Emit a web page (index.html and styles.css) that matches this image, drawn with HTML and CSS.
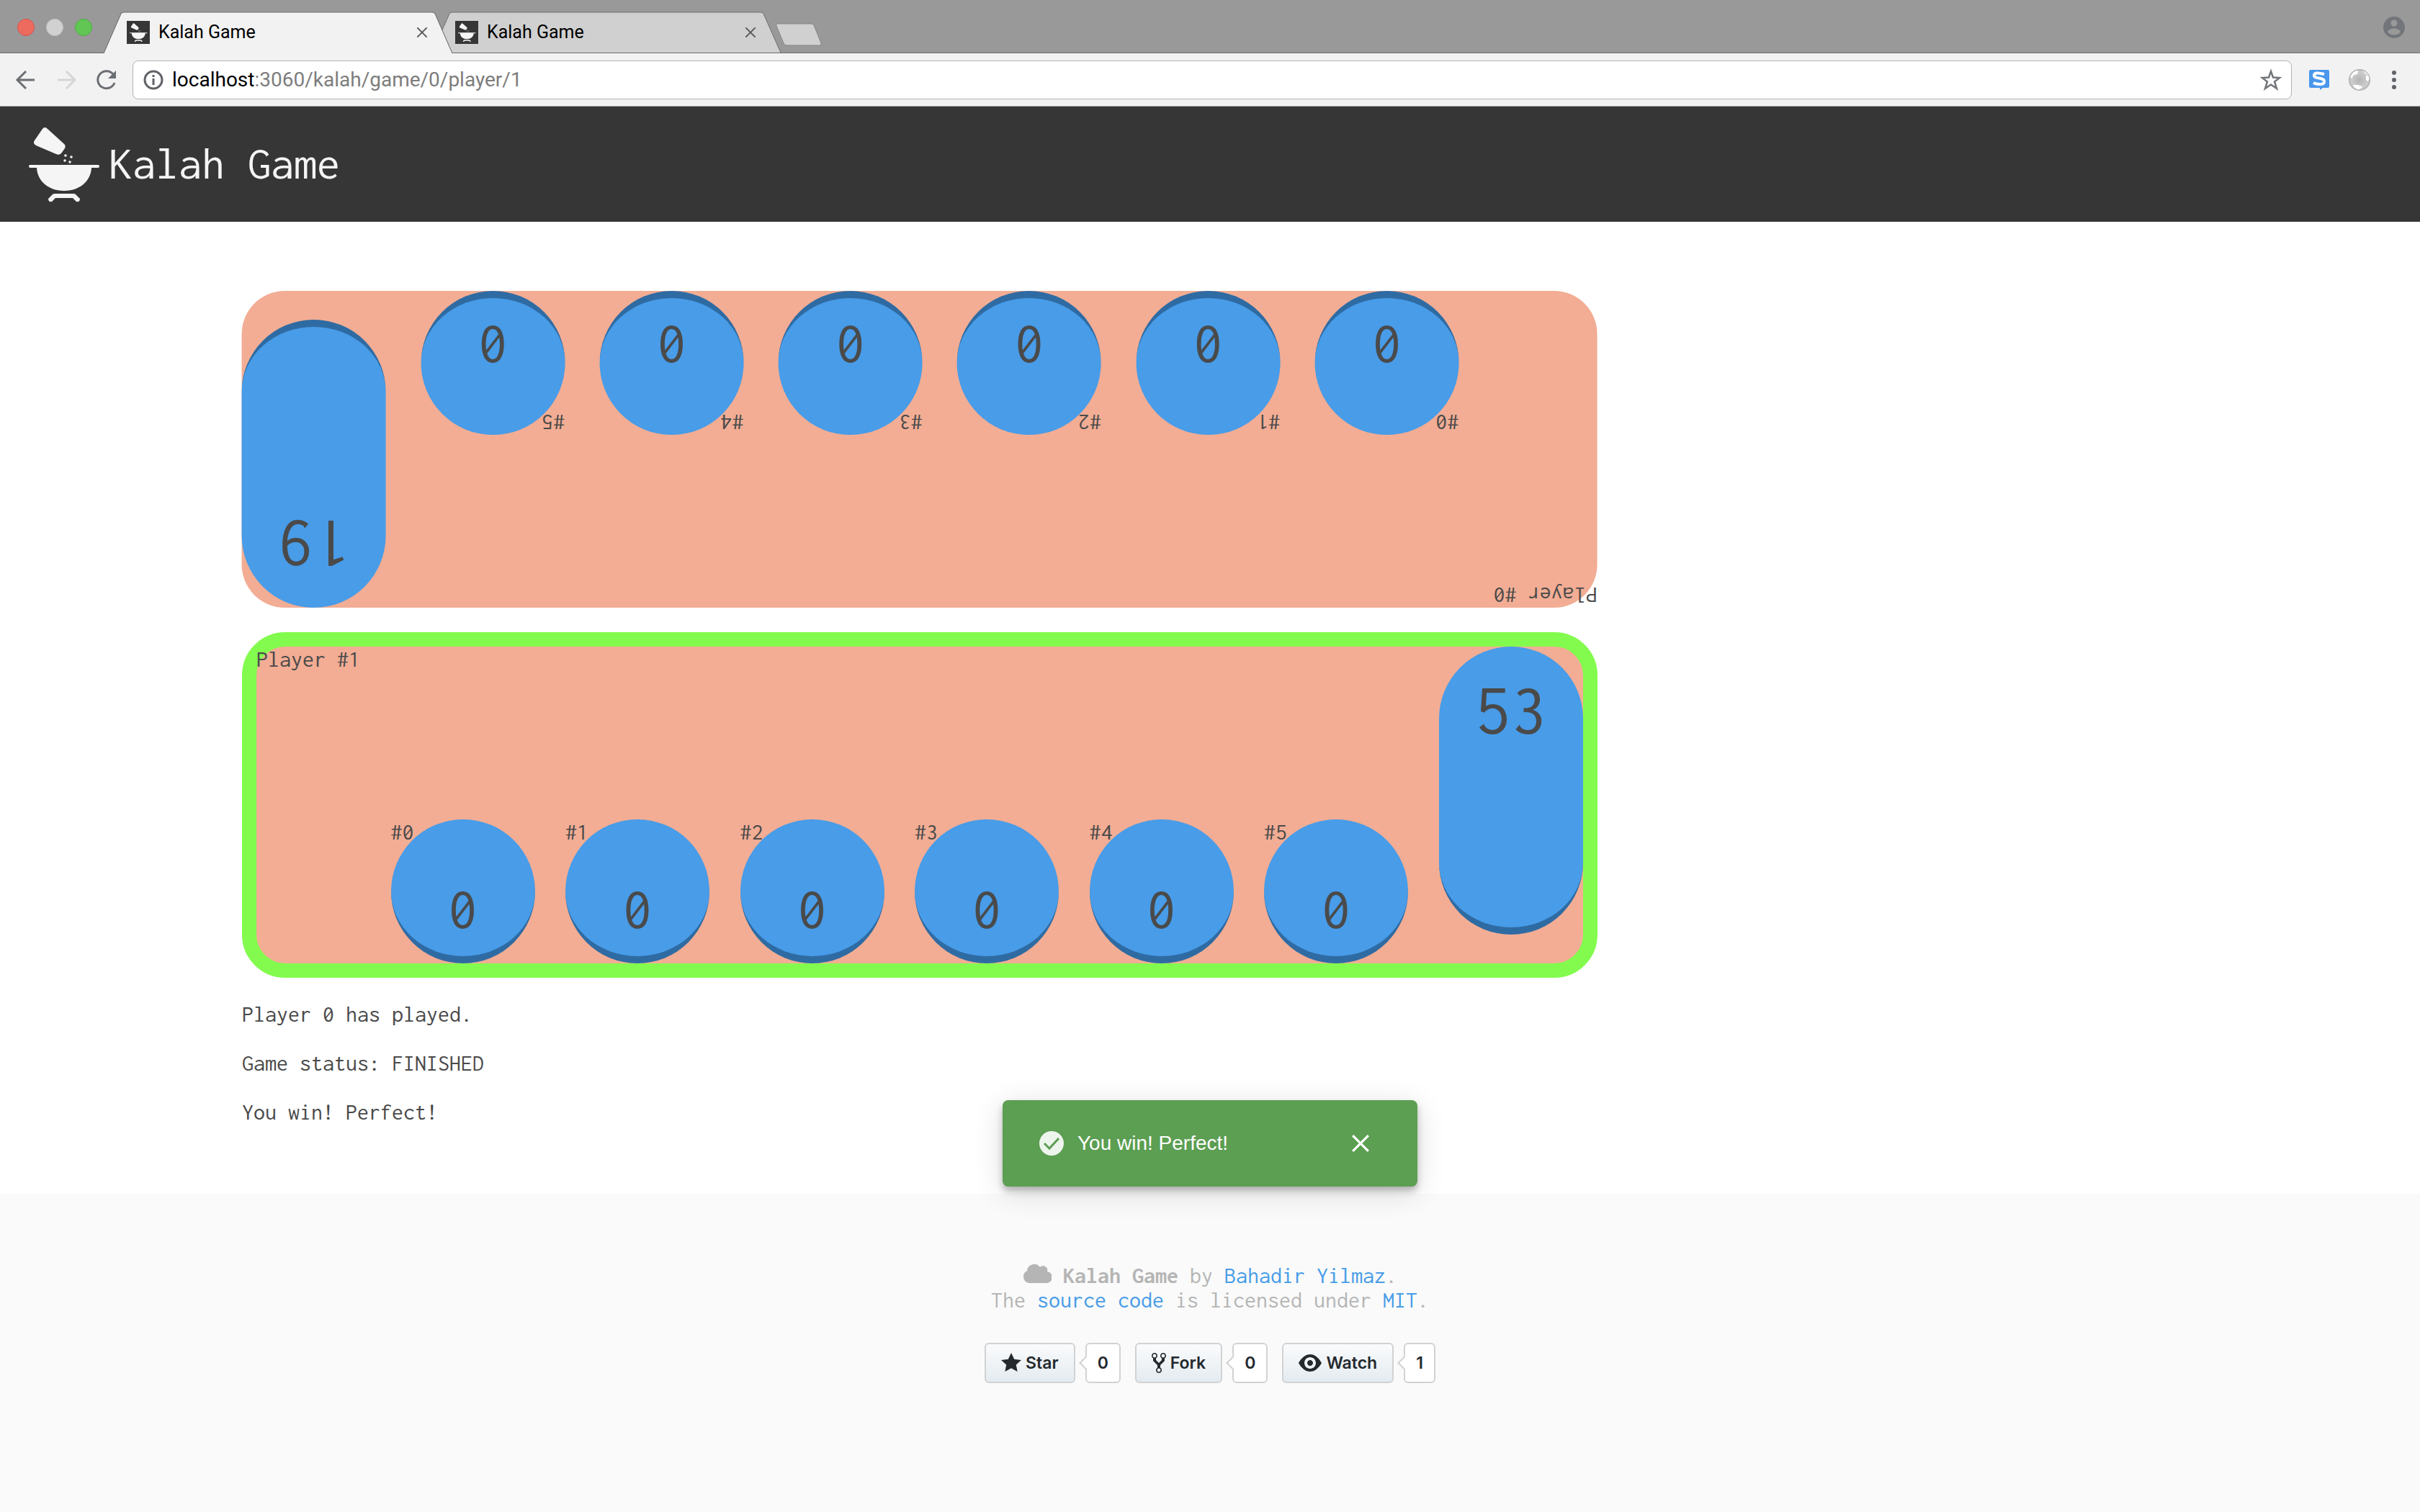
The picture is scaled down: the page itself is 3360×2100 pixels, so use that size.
FILE: index.html
```html
<!DOCTYPE html>
<html lang="en">
<head>
<meta charset="utf-8">
<title>Kalah Game</title>
<link rel="stylesheet" href="styles.css">
</head>
<body>
<svg class="defs" aria-hidden="true">
  <symbol id="bowl" viewBox="0 0 128 128">
    <g fill="currentColor">
      <path d="M35 15Q38 11 42 15L64 35Q68 38 66 42L61 49Q58 52 54 50L26 38Q21 35 24 31Z"/>
      <circle cx="67" cy="52" r="1.800"/><circle cx="75" cy="54" r="1.800"/><circle cx="66" cy="59" r="1.800"/><circle cx="73" cy="61" r="1.800"/>
      <path d="M18 65H112A2 2 0 0 1 112 69H103C102 89 85 101 65 101S28 89 27 69H18A2 2 0 0 1 18 65Z"/>
      <path d="M52 105H78Q80 105 81 106L87 112Q87 117 82 116L77 111H53L48 116Q43 117 43 112L49 106Q50 105 52 105Z"/>
    </g>
  </symbol>
  <symbol id="tab-shape" viewBox="0 0 484 57" preserveAspectRatio="none">
    <path d="M0 57L24 3Q25 1 28 1H456Q459 1 460 3L484 57" fill="currentColor" stroke="#6c6c6c" stroke-width="1"/>
  </symbol>
  <symbol id="cross" viewBox="0 0 24 24"><path d="M2 2L22 22M22 2L2 22" stroke="currentColor" stroke-width="3" fill="none"/></symbol>
</svg>

<div class="browser">
  <div class="tabstrip">
    <div class="lights"><i class="light red"></i><i class="light grey"></i><i class="light green"></i></div>
    <div class="tab active">
      <svg class="shape"><use href="#tab-shape"/></svg>
      <span class="favicon"><svg><use href="#bowl"/></svg></span>
      <span class="tab-title">Kalah Game</span>
      <button class="tab-close" aria-label="Close tab"><svg><use href="#cross"/></svg></button>
    </div>
    <div class="tab">
      <svg class="shape"><use href="#tab-shape"/></svg>
      <span class="favicon"><svg><use href="#bowl"/></svg></span>
      <span class="tab-title">Kalah Game</span>
      <button class="tab-close" aria-label="Close tab"><svg><use href="#cross"/></svg></button>
    </div>
    <button class="new-tab" aria-label="New tab"><svg viewBox="0 0 66 32"><path d="M3 1H50Q53 1 54 3L64 28Q65 31 62 31H16Q13 31 12 28L2 4Q1 1 3 1Z" fill="#d0d0d0" stroke="#858585"/></svg></button>
    <button class="profile" aria-label="Profile"><svg viewBox="0 0 32 32"><circle cx="16" cy="16" r="15" fill="#72767b"/><circle cx="16" cy="10" r="4.500" fill="#999"/><path d="M7 22C10 16 22 16 25 22C22 28 10 28 7 22Z" fill="#999"/></svg></button>
  </div>
  <div class="toolbar">
    <button aria-label="Back"><svg viewBox="0 0 32 32"><path d="M28 16H5M16 4L4 16L16 28" fill="none" stroke="#6b6e73" stroke-width="3"/></svg></button>
    <button aria-label="Forward"><svg viewBox="0 0 32 32"><path d="M4 16H27M16 4L28 16L16 28" fill="none" stroke="#d6d6d6" stroke-width="3"/></svg></button>
    <button aria-label="Reload"><svg viewBox="0 0 32 32"><path d="M27 20A12 12 0 1 1 25 8" fill="none" stroke="#6b6e73" stroke-width="3"/><path d="M29 3V14H18Z" fill="#6b6e73"/></svg></button>
    <div class="omnibox">
      <svg viewBox="0 0 32 32"><circle cx="16" cy="16" r="12" fill="none" stroke="#606368" stroke-width="3"/><path d="M16 14V23M16 9V12" stroke="#606368" stroke-width="3"/></svg>
      <div class="url"><b>localhost</b>:3060/kalah/game/0/player/1</div>
      <svg viewBox="0 0 32 32"><path d="M16 4L19 12.500L28 13L21 18.500L24 28L16 22.500L8 28L11 18.500L4 13L13 12.500Z" fill="none" stroke="#72767b" stroke-width="2.500"/></svg>
    </div>
    <button class="ext" aria-label="S extension"><svg viewBox="0 0 32 32"><path d="M4 2H28Q30 2 30 4V25Q30 27 28 27H21L17 30V27H4Q2 27 2 25V4Q2 2 4 2Z" fill="#4a97ec"/><path d="M23 8Q9 4 9 10C9 15 23 12 23 18C23 24 12 22 8 20" fill="none" stroke="#fff" stroke-width="4"/></svg></button>
    <button class="ext" aria-label="Globe extension"><svg viewBox="0 0 32 32"><defs><radialGradient id="globe"><stop offset="0" stop-color="#b4b4b4"/><stop offset=".8" stop-color="#cecece"/><stop offset="1" stop-color="#a8a8a8"/></radialGradient></defs><circle cx="16" cy="16" r="15" fill="url(#globe)"/><path d="M3 12Q7 3 14 3L13 8L8 9L5 14ZM20 3Q26 5 29 11L24 7ZM25 10L29 11Q30 15 28 18L25 16ZM7 23L14 23L20 25Q18 30 13 29Q8 27 7 23Z" fill="#fff"/></svg></button>
    <button class="menu" aria-label="Menu"><svg viewBox="0 0 32 32" fill="#606368"><circle cx="16" cy="6" r="3"/><circle cx="16" cy="16" r="3"/><circle cx="16" cy="26" r="3"/></svg></button>
  </div>
</div>

<header class="navbar">
  <svg class="logo"><use href="#bowl"/></svg>
  <h1>Kalah Game</h1>
</header>

<main class="game">
  <section class="board opponent">
    <span class="owner">Player #0</span>
    <button class="pit"><span class="label">#0</span><span class="count">0</span></button>
    <button class="pit"><span class="label">#1</span><span class="count">0</span></button>
    <button class="pit"><span class="label">#2</span><span class="count">0</span></button>
    <button class="pit"><span class="label">#3</span><span class="count">0</span></button>
    <button class="pit"><span class="label">#4</span><span class="count">0</span></button>
    <button class="pit"><span class="label">#5</span><span class="count">0</span></button>
    <div class="store">19</div>
  </section>
  <section class="board current">
    <span class="owner">Player #1</span>
    <button class="pit"><span class="label">#0</span><span class="count">0</span></button>
    <button class="pit"><span class="label">#1</span><span class="count">0</span></button>
    <button class="pit"><span class="label">#2</span><span class="count">0</span></button>
    <button class="pit"><span class="label">#3</span><span class="count">0</span></button>
    <button class="pit"><span class="label">#4</span><span class="count">0</span></button>
    <button class="pit"><span class="label">#5</span><span class="count">0</span></button>
    <div class="store">53</div>
  </section>
  <p>Player 0 has played.</p>
  <p>Game status: FINISHED</p>
  <p>You win! Perfect!</p>

  <div class="toast" role="status">
    <svg viewBox="0 0 36 36"><circle cx="18" cy="18" r="17" fill="#eef5ed"/><path d="M8 18L15 25L28 11" fill="none" stroke="#5c9e52" stroke-width="3"/></svg>
    <span class="toast-text">You win! Perfect!</span>
    <button class="toast-close" aria-label="Dismiss"><svg><use href="#cross"/></svg></button>
  </div>
</main>

<footer class="footer">
  <p><svg class="cloud" viewBox="0 0 40 28"><path d="M9 28A9 9 0 0 1 6 11A10 10 0 0 1 24 6A6 6 0 0 1 34 12A8 8 0 0 1 32 28Z" fill="currentColor"/></svg> <strong>Kalah Game</strong> by <a href="#author">Bahadir Yilmaz</a>.</p>
  <p>The <a href="#source">source code</a> is licensed under <a href="#license">MIT</a>.</p>
  <div class="github">
    <div class="gh"><a class="gh-btn" href="#star"><svg viewBox="0 0 14 16"><path d="M14 6l-4.900-.640L7 1 4.900 5.360 0 6l3.600 3.260L2.670 14 7 11.670 11.330 14l-.93-4.740z"/></svg>Star</a><a class="gh-count" href="#stars">0</a></div>
    <div class="gh"><a class="gh-btn" href="#fork"><svg class="narrow" viewBox="0 0 10 16"><path fill-rule="evenodd" d="M8 1a1.993 1.993 0 0 0-1 3.720V6L5 8 3 6V4.720A1.993 1.993 0 0 0 2 1a1.993 1.993 0 0 0-1 3.720V6.500l3 3v1.780A1.993 1.993 0 0 0 5 15a1.993 1.993 0 0 0 1-3.720V9.500l3-3V4.720A1.993 1.993 0 0 0 8 1zM2 4.200C1.340 4.200.8 3.650.8 3c0-.650.550-1.200 1.200-1.200.650 0 1.200.550 1.200 1.200 0 .650-.550 1.200-1.200 1.200zm3 10c-.660 0-1.200-.550-1.200-1.200 0-.650.550-1.200 1.200-1.200.650 0 1.200.550 1.200 1.200 0 .650-.550 1.200-1.200 1.200zm3-10c-.660 0-1.200-.550-1.200-1.200 0-.650.550-1.200 1.200-1.200.650 0 1.200.550 1.200 1.200 0 .650-.550 1.200-1.200 1.200z"/></svg>Fork</a><a class="gh-count" href="#forks">0</a></div>
    <div class="gh"><a class="gh-btn" href="#watch"><svg class="wide" viewBox="0 0 16 16"><path fill-rule="evenodd" d="M8.060 2C3 2 0 8 0 8s3 6 8.060 6C13 14 16 8 16 8s-3-6-7.940-6zM8 12c-2.200 0-4-1.780-4-4 0-2.200 1.800-4 4-4 2.220 0 4 1.800 4 4 0 2.220-1.780 4-4 4zm2-4c0 1.110-.890 2-2 2-1.110 0-2-.890-2-2 0-1.110.890-2 2-2 1.110 0 2 .890 2 2z"/></svg>Watch</a><a class="gh-count" href="#watchers">1</a></div>
  </div>
</footer>
</body>
</html>
```

FILE: styles.css
```css
*, *::before, *::after { box-sizing: border-box; }
body {
  margin: 0;
  min-height: 100vh;
  display: flex;
  flex-direction: column;
  background: #fff;
  color: #4a4a4a;
  font: 32px/34px Inconsolata, "Noto Sans Mono CJK JP", "Liberation Mono", monospace;
}
button { padding: 0; border: 0; background: none; color: inherit; font: inherit; display: flex; }
a { color: #479ce8; text-decoration: none; }
p, h1 { margin: 0; }
svg { display: block; flex: none; }
.defs { position: absolute; width: 0; height: 0; }

/* browser window */
.browser { font-family: Roboto, sans-serif; color: #000; }
.tabstrip { display: flex; align-items: flex-end; height: 74px; padding: 0 20px 0 24px; background: #999; border-bottom: 1px solid #6c6c6c; }
.lights { display: flex; gap: 16px; width: 120px; padding-bottom: 23px; }
.light { width: 24px; height: 24px; border-radius: 50%; }
.red { background: #ed6a5e; border: 1px solid #d5564b; }
.grey { background: #d1d1d1; border: 1px solid #c4c4c4; }
.green { background: #61c654; border: 1px solid #50ab44; }
.tab { position: relative; display: flex; align-items: center; width: 484px; height: 57px; padding: 0 34px 0 32px; color: #d0d0d0; }
.tab + .tab { margin-left: -28px; }
.tab.active { z-index: 1; height: 58px; margin-bottom: -1px; color: #f2f2f2; }
.shape { position: absolute; inset: 0; width: 100%; height: 100%; }
.favicon { position: relative; display: flex; background: #363636; color: #f5f5f5; }
.favicon svg { width: 32px; height: 32px; }
.tab-title { position: relative; flex: 1; padding-left: 12px; font-size: 25px; color: #000; }
.tab-close { position: relative; color: #5a5a5a; }
.tab-close svg { width: 16px; height: 16px; }
.new-tab { margin: 0 auto 9px -8px; }
.new-tab svg { width: 66px; height: 32px; }
.profile { margin-bottom: 19px; }
.profile svg, .toolbar svg { width: 32px; height: 32px; }
.toolbar { display: flex; align-items: center; height: 74px; padding: 0 20px; background: #f2f2f2; border-bottom: 1px solid #a9a9a9; }
.toolbar button { margin-right: 24px; }
.omnibox { flex: 1; display: flex; align-items: center; height: 54px; margin: 0 22px 0 -4px; padding: 0 12px; background: #fff; border: 1px solid #b3b3b3; border-radius: 8px; }
.url { flex: 1; padding-left: 10px; font-size: 28px; color: #7d7d7d; }
.url b { font-weight: 400; color: #000; }
.toolbar .ext + .ext { margin-right: 16px; }
.toolbar .menu { margin: 0; }

/* page header */
.navbar { display: flex; align-items: center; height: 160px; padding: 0 24px; background: #363636; color: #f5f5f5; }
.logo { width: 128px; height: 128px; }
h1 { padding-bottom: 2px; font-size: 64px; line-height: 68px; font-weight: 400; }

/* game */
.game { position: relative; padding: 96px 10%; display: flex; flex-direction: column; gap: 34px; }
.board { display: flex; justify-content: space-between; width: 70%; background: #f2ad94; border-radius: 60px; }
.opponent { height: 440px; transform: rotate(180deg); }
.current { border: 20px solid #83fb4e; height: 480px; }
.owner, .label { line-height: 36px; }
.owner { width: 144px; white-space: nowrap; }
.pit, .store { width: 200px; background: #489ce8; border-radius: 100px; border-bottom: 10px solid #2f6ba3; color: #4a4a4a; }
.pit { align-self: flex-end; height: 200px; flex-direction: column; align-items: flex-start; }
.count { align-self: center; padding-top: 46px; font-size: 80px; line-height: 84px; }
.store { height: 400px; padding-top: 36px; font-size: 100px; line-height: 104px; text-align: center; }

.toast { position: absolute; bottom: 10px; left: 50%; display: flex; align-items: center; width: 576px; height: 120px; margin-left: -288px; padding: 0 66px 0 50px; border-radius: 8px; background: #5c9e52; color: #fff; font: 28px/32px "Liberation Sans", Arial, sans-serif; box-shadow: 0 6px 10px rgba(0,0,0,.25), 0 8px 40px rgba(0,0,0,.14); }
.toast > svg { width: 36px; height: 36px; }
.toast-text { flex: 1; padding-left: 18px; }
.toast-close svg { width: 26px; height: 26px; }

/* page footer */
.footer { flex: 1; padding: 96px 48px; background: #fafafa; color: #b5b5b5; text-align: center; }
.cloud { display: inline-block; width: 40px; height: 28px; }
.github { display: flex; justify-content: center; gap: 20px; padding-top: 42px; font: 600 23px/52px Inter, sans-serif; }
.gh { display: flex; gap: 14px; }
.gh-btn, .gh-count { display: flex; align-items: center; height: 56px; border: 2px solid #d1d2d3; border-radius: 6px; color: #24292e; }
.gh-btn { gap: 6px; padding: 0 21px; background: linear-gradient(#fafbfc, #e4ebf0); }
.gh-btn svg { width: 28px; height: 32px; fill: currentColor; }
.gh-btn .narrow { width: 20px; }
.gh-btn .wide { width: 32px; }
.gh-count { position: relative; padding: 0 15px; background: #fff; }
.gh-count::before { content: ""; position: absolute; left: -8px; top: 19px; width: 14px; height: 14px; background: #fff; border: solid #d1d2d3; border-width: 0 0 2px 2px; transform: rotate(45deg); }
```
